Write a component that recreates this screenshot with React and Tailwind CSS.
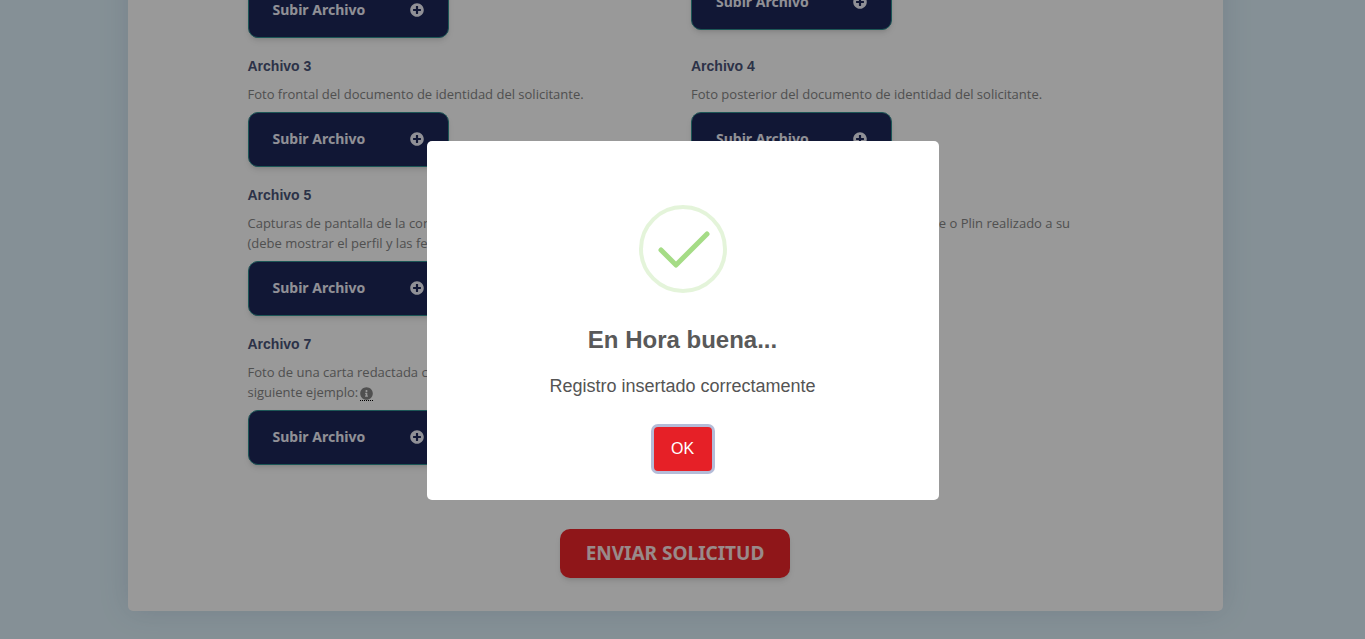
import { useState } from 'react';
import { FaInfoCircle, FaPlusCircle } from 'react-icons/fa';

const FILES = [
  { id: 1, description: 'Foto del recibo de luz o agua.' },
  { id: 2, compact: true, description: 'Foto del comprobante de ingresos.' },
  { id: 3, description: 'Foto frontal del documento de identidad del solicitante.' },
  { id: 4, description: 'Foto posterior del documento de identidad del solicitante.' },
  {
    id: 5,
    description:
      'Capturas de pantalla de la conversación de WhatsApp completa (debe mostrar el perfil y las fechas).',
  },
  {
    id: 6,
    description: 'Captura de pantalla del depósito por Yape o Plin realizado a su representante.',
  },
  {
    id: 7,
    description: 'Foto de una carta redactada con puño y letra de acuerdo al siguiente ejemplo:',
    info: 'Ver ejemplo de carta',
  },
];

const FileField = ({ file }) => (
  <div>
    <h3 className="font-['Liberation_Sans'] text-sm leading-5 font-bold text-[#4a5478]">Archivo {file.id}</h3>
    <p className={`mt-2 text-[13px] leading-5 text-[#858585] ${file.compact ? 'mb-0' : 'mb-2'}`}>
      {file.description}
      {file.info && (
        <abbr
          title={file.info}
          className="ml-0.5 inline-block border-b border-dotted border-black align-middle leading-none no-underline"
        >
          <FaInfoCircle className="text-[13px]" />
        </abbr>
      )}
    </p>
    <button
      type="button"
      className="flex h-[55px] w-[201px] items-center justify-between rounded-[10px] border border-[#2f8f8f] bg-[#1d2759] px-6 pb-0.5 font-['Noto_Sans'] text-sm font-bold text-[#f0f0fa] shadow-md"
    >
      Subir Archivo
      <FaPlusCircle />
    </button>
  </div>
);

const SuccessIcon = () => (
  <svg viewBox="0 0 88 88" className="size-[88px]" fill="none" aria-hidden="true">
    <circle cx="44" cy="44" r="42" stroke="#a5dc86" strokeOpacity="0.3" strokeWidth="4" />
    <path d="M22 45L37 60L68 29" stroke="#a5dc86" strokeWidth="5" strokeLinecap="round" strokeLinejoin="round" />
  </svg>
);

const SuccessDialog = ({ onClose }) => (
  <div className="fixed inset-0 flex items-center justify-center bg-black/40 pt-0.5">
    <div
      role="dialog"
      aria-modal="true"
      aria-labelledby="dialog-title"
      className="flex w-full max-w-[512px] flex-col items-center rounded-[5px] bg-white px-5 pt-16 pb-[29px] font-['Liberation_Sans'] text-[#545454]"
    >
      <SuccessIcon />
      <h2 id="dialog-title" className="mt-[31px] text-2xl leading-8 font-bold text-[#595959]">
        En Hora buena...
      </h2>
      <p className="mt-[18px] text-lg leading-6">Registro insertado correctamente</p>
      <button
        type="button"
        onClick={onClose}
        className="mt-[29px] h-11 w-[58px] rounded-[4px] bg-[#e62027] text-base text-white ring-3 ring-[#b4bcd8]"
      >
        OK
      </button>
    </div>
  </div>
);

const App = () => {
  const [showSuccess, setShowSuccess] = useState(true);

  return (
    <div className="flex h-screen flex-col justify-end overflow-hidden bg-[#def1fa] pr-[15px] pb-7 font-['Open_Sans',sans-serif]">
      <form
        onSubmit={(e) => e.preventDefault()}
        className="mx-auto w-full max-w-[1095px] rounded-[5px] bg-white px-[120px] pb-[33px] shadow-[0_0_30px_rgba(60,90,130,0.15)]"
      >
        <div className="grid grid-cols-2 gap-x-8 gap-y-[18px]">
          {FILES.map((file) => (
            <FileField key={file.id} file={file} />
          ))}
        </div>
        <div className="mt-16 flex justify-center">
          <button
            type="submit"
            className="h-[49px] w-[230px] rounded-[10px] bg-[#ee252b] font-['Noto_Sans'] text-[19px] font-bold text-[#ffe6e6] shadow-md"
          >
            ENVIAR SOLICITUD
          </button>
        </div>
      </form>

      {showSuccess && <SuccessDialog onClose={() => setShowSuccess(false)} />}
    </div>
  );
};

export default App;
